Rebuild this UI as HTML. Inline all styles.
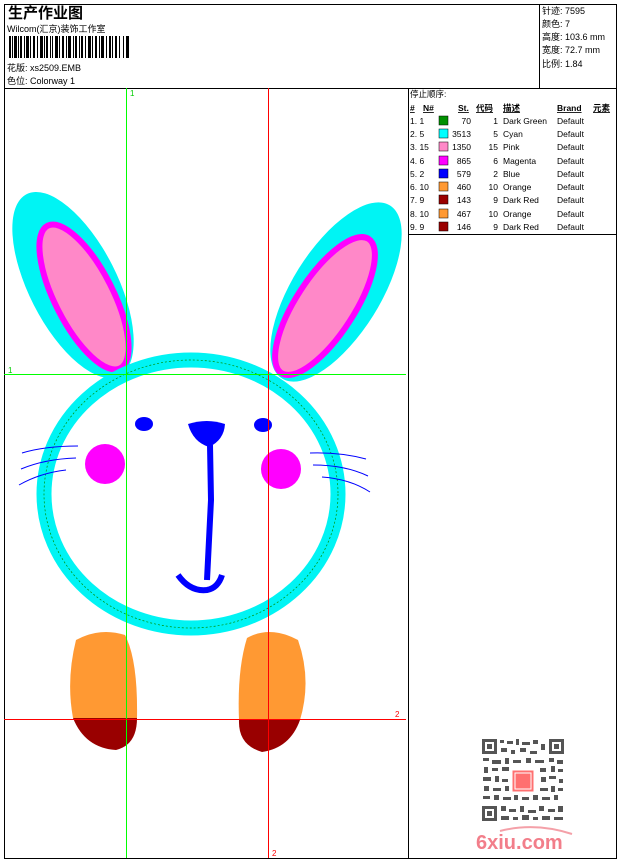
<!DOCTYPE html>
<html><head><meta charset="utf-8"><style>
body{margin:0;background:#fff;width:620px;height:860px;overflow:hidden;font-family:"Liberation Sans","Noto Sans CJK SC",sans-serif;}
svg text{font-family:"Liberation Sans","Noto Sans CJK SC",sans-serif;}
</style></head><body>
<svg width="620" height="860" viewBox="0 0 620 860" xmlns="http://www.w3.org/2000/svg">
<rect x="4.5" y="4.5" width="612" height="854" fill="none" stroke="#000"/>
<line x1="4" y1="88.5" x2="617" y2="88.5" stroke="#000"/>
<line x1="539.5" y1="4" x2="539.5" y2="88" stroke="#000"/>
<line x1="408.5" y1="88" x2="408.5" y2="859" stroke="#000"/>
<line x1="408" y1="234.5" x2="617" y2="234.5" stroke="#000"/>
<text x="8" y="18" font-size="15" font-weight="bold">生产作业图</text>
<text x="7" y="32" font-size="9">Wilcom(汇京)装饰工作室</text>
<g fill="#000">
<rect x="9" y="36" width="2" height="22"/><rect x="12" y="36" width="1" height="22"/><rect x="14" y="36" width="3" height="22"/><rect x="18" y="36" width="1" height="22"/><rect x="20" y="36" width="2" height="22"/><rect x="24" y="36" width="1" height="22"/><rect x="26" y="36" width="3" height="22"/><rect x="30" y="36" width="1" height="22"/><rect x="33" y="36" width="2" height="22"/><rect x="37" y="36" width="1" height="22"/><rect x="40" y="36" width="3" height="22"/><rect x="44" y="36" width="1" height="22"/><rect x="46" y="36" width="2" height="22"/><rect x="50" y="36" width="1" height="22"/><rect x="52" y="36" width="1" height="22"/><rect x="55" y="36" width="3" height="22"/><rect x="59" y="36" width="1" height="22"/><rect x="62" y="36" width="2" height="22"/><rect x="66" y="36" width="1" height="22"/><rect x="68" y="36" width="3" height="22"/><rect x="73" y="36" width="1" height="22"/><rect x="75" y="36" width="2" height="22"/><rect x="79" y="36" width="1" height="22"/><rect x="81" y="36" width="2" height="22"/><rect x="85" y="36" width="1" height="22"/><rect x="88" y="36" width="3" height="22"/><rect x="92" y="36" width="1" height="22"/><rect x="95" y="36" width="2" height="22"/><rect x="99" y="36" width="1" height="22"/><rect x="101" y="36" width="3" height="22"/><rect x="106" y="36" width="1" height="22"/><rect x="109" y="36" width="2" height="22"/><rect x="112" y="36" width="1" height="22"/><rect x="115" y="36" width="2" height="22"/><rect x="119" y="36" width="1" height="22"/><rect x="123" y="36" width="1" height="22"/><rect x="126" y="36" width="3" height="22"/>
</g>
<text x="7" y="71" font-size="9">花版: xs2509.EMB</text>
<text x="7" y="84" font-size="9">色位:  Colorway 1</text>
<g font-size="9">
<text x="542" y="14">针迹: 7595</text>
<text x="542" y="27">颜色: 7</text>
<text x="542" y="40">高度: 103.6 mm</text>
<text x="542" y="53">宽度: 72.7 mm</text>
<text x="542" y="67">比例: 1.84</text>
</g>
<!-- table -->
<g font-size="8.5">
<text x="410" y="97">停止顺序:</text>
<g font-weight="bold" text-decoration="underline">
<text x="410" y="111">#</text><text x="423" y="111">N#</text><text x="458" y="111">St.</text><text x="476" y="111">代码</text><text x="503" y="111">描述</text><text x="557" y="111">Brand</text><text x="593" y="111">元素</text>
</g>
<g>
<text x="410" y="124">1. 1</text><rect x="439" y="116" width="9" height="9" fill="#009000" stroke="#000" stroke-width=".5"/><text x="471" y="124" text-anchor="end">70</text><text x="498" y="124" text-anchor="end">1</text><text x="503" y="124">Dark Green</text><text x="557" y="124">Default</text>
<text x="410" y="137">2. 5</text><rect x="439" y="129" width="9" height="9" fill="#00ffff" stroke="#000" stroke-width=".5"/><text x="471" y="137" text-anchor="end">3513</text><text x="498" y="137" text-anchor="end">5</text><text x="503" y="137">Cyan</text><text x="557" y="137">Default</text>
<text x="410" y="150">3. 15</text><rect x="439" y="142" width="9" height="9" fill="#ff88c8" stroke="#000" stroke-width=".5"/><text x="471" y="150" text-anchor="end">1350</text><text x="498" y="150" text-anchor="end">15</text><text x="503" y="150">Pink</text><text x="557" y="150">Default</text>
<text x="410" y="164">4. 6</text><rect x="439" y="156" width="9" height="9" fill="#ff00ff" stroke="#000" stroke-width=".5"/><text x="471" y="164" text-anchor="end">865</text><text x="498" y="164" text-anchor="end">6</text><text x="503" y="164">Magenta</text><text x="557" y="164">Default</text>
<text x="410" y="177">5. 2</text><rect x="439" y="169" width="9" height="9" fill="#0000ff" stroke="#000" stroke-width=".5"/><text x="471" y="177" text-anchor="end">579</text><text x="498" y="177" text-anchor="end">2</text><text x="503" y="177">Blue</text><text x="557" y="177">Default</text>
<text x="410" y="190">6. 10</text><rect x="439" y="182" width="9" height="9" fill="#ff9933" stroke="#000" stroke-width=".5"/><text x="471" y="190" text-anchor="end">460</text><text x="498" y="190" text-anchor="end">10</text><text x="503" y="190">Orange</text><text x="557" y="190">Default</text>
<text x="410" y="203">7. 9</text><rect x="439" y="195" width="9" height="9" fill="#990000" stroke="#000" stroke-width=".5"/><text x="471" y="203" text-anchor="end">143</text><text x="498" y="203" text-anchor="end">9</text><text x="503" y="203">Dark Red</text><text x="557" y="203">Default</text>
<text x="410" y="217">8. 10</text><rect x="439" y="209" width="9" height="9" fill="#ff9933" stroke="#000" stroke-width=".5"/><text x="471" y="217" text-anchor="end">467</text><text x="498" y="217" text-anchor="end">10</text><text x="503" y="217">Orange</text><text x="557" y="217">Default</text>
<text x="410" y="230">9. 9</text><rect x="439" y="222" width="9" height="9" fill="#990000" stroke="#000" stroke-width=".5"/><text x="471" y="230" text-anchor="end">146</text><text x="498" y="230" text-anchor="end">9</text><text x="503" y="230">Dark Red</text><text x="557" y="230">Default</text>
</g>
</g>
<!-- bunny -->
<ellipse cx="73" cy="285" rx="44" ry="102" transform="rotate(-27 73 285)" fill="#00f4f4"/>
<ellipse cx="336" cy="292" rx="44" ry="102" transform="rotate(32 336 292)" fill="#00f4f4"/>
<ellipse cx="84" cy="297" rx="29" ry="80" transform="rotate(-27 84 297)" fill="#ff88c8" stroke="#ff00ff" stroke-width="6"/>
<ellipse cx="325" cy="306" rx="29" ry="80" transform="rotate(33 325 306)" fill="#ff88c8" stroke="#ff00ff" stroke-width="6"/>
<ellipse cx="191" cy="494" rx="147" ry="134" fill="#fff" stroke="#00f4f4" stroke-width="15"/>
<ellipse cx="191" cy="494" rx="147" ry="134" fill="none" stroke="#009000" stroke-width="0.7" stroke-dasharray="2 2"/>
<ellipse cx="144" cy="424" rx="9" ry="7" fill="#0000ff"/>
<ellipse cx="263" cy="425" rx="9" ry="7" fill="#0000ff"/>
<path d="M188 424 Q207 418 225 424 Q224 440 209 447 Q193 442 188 424Z" fill="#0000ff"/>
<path d="M210 445 L211 500 L207 580" stroke="#0000ff" stroke-width="6" fill="none"/>
<path d="M178 575 Q190 592 207 590 Q218 588 222 575" stroke="#0000ff" stroke-width="6" fill="none"/>
<circle cx="105" cy="464" r="20" fill="#ff00ff"/>
<circle cx="281" cy="469" r="20" fill="#ff00ff"/>
<g stroke="#0000ff" stroke-width="1" fill="none">
<path d="M22 453 Q45 446 78 446"/><path d="M21 469 Q45 459 76 458"/><path d="M19 485 Q40 473 66 470"/>
<path d="M310 453 Q340 452 366 459"/><path d="M313 465 Q345 465 368 476"/><path d="M322 477 Q350 479 370 492"/>
</g>
<path d="M76 640 Q100 627 125 635 Q138 660 137 718 L73 718 Q66 680 76 640Z" fill="#ff9933"/>
<path d="M73 718 L137 718 Q137 745 116 750 Q85 748 73 718Z" fill="#990000"/>
<path d="M247 638 Q270 625 298 640 Q312 680 300 720 L239 720 Q237 670 247 638Z" fill="#ff9933"/>
<path d="M239 720 L300 720 Q290 748 262 752 Q238 745 239 720Z" fill="#990000"/>
<!-- guides -->
<line x1="126.5" y1="88" x2="126.5" y2="858" stroke="#00ff00"/>
<line x1="268.5" y1="88" x2="268.5" y2="858" stroke="#ff0000"/>
<line x1="4" y1="374.5" x2="406" y2="374.5" stroke="#00ff00"/>
<line x1="4" y1="719.5" x2="406" y2="719.5" stroke="#ff0000"/>
<text x="130" y="96" font-size="8" fill="#00cc00">1</text>
<text x="8" y="373" font-size="8" fill="#00cc00">1</text>
<text x="395" y="717" font-size="8" fill="#ff0000">2</text>
<text x="272" y="856" font-size="8" fill="#ff0000">2</text>
<!-- QR -->
<g fill="#555">
<rect x="482" y="739" width="82" height="82" fill="#fff"/>
<rect x="482" y="739" width="15" height="15"/><rect x="485" y="742" width="9" height="9" fill="#fff"/><rect x="487" y="744" width="5" height="5"/>
<rect x="549" y="739" width="15" height="15"/><rect x="552" y="742" width="9" height="9" fill="#fff"/><rect x="554" y="744" width="5" height="5"/>
<rect x="482" y="806" width="15" height="15"/><rect x="485" y="809" width="9" height="9" fill="#fff"/><rect x="487" y="811" width="5" height="5"/>
<rect x="500" y="740" width="4" height="3"/><rect x="507" y="741" width="6" height="3"/><rect x="516" y="739" width="3" height="6"/><rect x="522" y="742" width="8" height="3"/><rect x="533" y="740" width="5" height="4"/><rect x="541" y="744" width="4" height="6"/>
<rect x="501" y="748" width="6" height="4"/><rect x="511" y="750" width="4" height="4"/><rect x="520" y="748" width="6" height="4"/><rect x="530" y="751" width="7" height="3"/>
<rect x="483" y="758" width="6" height="3"/><rect x="492" y="760" width="9" height="4"/><rect x="505" y="758" width="4" height="6"/><rect x="513" y="760" width="8" height="3"/><rect x="526" y="758" width="5" height="5"/><rect x="535" y="760" width="9" height="3"/><rect x="549" y="758" width="5" height="4"/><rect x="557" y="760" width="6" height="4"/>
<rect x="484" y="767" width="4" height="6"/><rect x="492" y="768" width="6" height="3"/><rect x="502" y="767" width="7" height="4"/><rect x="540" y="768" width="6" height="4"/><rect x="551" y="766" width="4" height="6"/><rect x="558" y="769" width="5" height="3"/>
<rect x="483" y="777" width="8" height="4"/><rect x="495" y="776" width="4" height="6"/><rect x="502" y="779" width="6" height="3"/><rect x="541" y="777" width="5" height="5"/><rect x="549" y="776" width="7" height="3"/><rect x="559" y="779" width="4" height="4"/>
<rect x="484" y="786" width="5" height="5"/><rect x="493" y="788" width="8" height="3"/><rect x="505" y="786" width="4" height="5"/><rect x="540" y="788" width="8" height="3"/><rect x="551" y="786" width="4" height="6"/><rect x="558" y="788" width="5" height="3"/>
<rect x="483" y="796" width="7" height="3"/><rect x="494" y="795" width="5" height="5"/><rect x="503" y="797" width="8" height="3"/><rect x="514" y="795" width="4" height="5"/><rect x="522" y="797" width="7" height="3"/><rect x="533" y="795" width="5" height="5"/><rect x="542" y="797" width="8" height="3"/><rect x="554" y="795" width="4" height="5"/>
<rect x="501" y="806" width="5" height="5"/><rect x="509" y="809" width="7" height="3"/><rect x="520" y="806" width="4" height="6"/><rect x="528" y="810" width="8" height="3"/><rect x="539" y="806" width="5" height="5"/><rect x="548" y="809" width="7" height="3"/><rect x="558" y="806" width="5" height="6"/>
<rect x="501" y="816" width="8" height="4"/><rect x="513" y="817" width="5" height="3"/><rect x="522" y="815" width="7" height="5"/><rect x="533" y="817" width="5" height="3"/><rect x="542" y="816" width="8" height="4"/><rect x="554" y="817" width="9" height="3"/>
</g>
<rect x="512" y="770" width="22" height="22" fill="#ff7070" stroke="#fff" stroke-width="1"/>
<rect x="515" y="773" width="16" height="16" fill="none" stroke="#fff" stroke-width="1"/>
<path d="M500 831 Q535 822 572 834" stroke="#f4a0a8" stroke-width="2" fill="none"/>
<text x="476" y="849" font-size="20" font-weight="bold" fill="#f27e8a">6xiu.com</text>
</svg>
</body></html>
